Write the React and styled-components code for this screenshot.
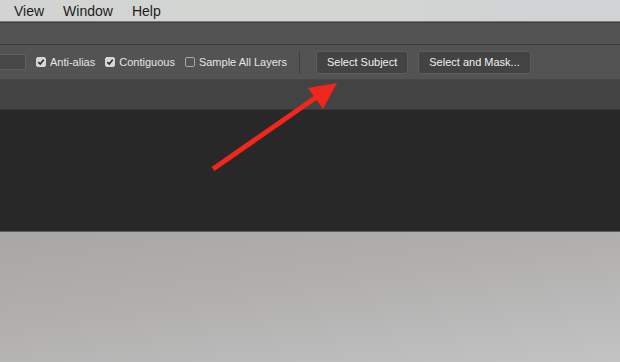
import React from "react";
import styled, { createGlobalStyle } from "styled-components";

const GlobalStyle = createGlobalStyle`
  html, body {
    margin: 0;
    padding: 0;
    width: 620px;
    height: 362px;
    overflow: hidden;
  }
  body {
    font-family: "Liberation Sans", Arial, sans-serif;
  }
`;

const Screen = styled.div`
  position: relative;
  width: 620px;
  height: 362px;
  display: flex;
  flex-direction: column;
  overflow: hidden;
`;

const MenuBar = styled.div`
  height: 22px;
  background: linear-gradient(90deg, #d2d4d3, #d3d5d1 50%, #d0d3d6);
  border-bottom: 1px solid #7d7d7d;
  display: flex;
  align-items: center;
  gap: 19px;
  padding-left: 14px;
  box-sizing: border-box;
  flex-shrink: 0;
`;

const MenuItem = styled.span`
  font-size: 14px;
  color: #1d1d1d;
  line-height: 22px;
`;

const TitleStrip = styled.div`
  height: 23px;
  background: #535353;
  border-top: 1px solid #3e3e3e;
  border-bottom: 1px solid #3c3c3c;
  box-sizing: border-box;
  flex-shrink: 0;
`;

const OptionsBar = styled.div`
  height: 35px;
  background: #535353;
  border-bottom: 1px solid #474747;
  box-sizing: border-box;
  display: flex;
  align-items: center;
  flex-shrink: 0;
`;

const Field = styled.div`
  width: 26px;
  height: 16px;
  background: #474747;
  border: 1px solid #5f5f5f;
  border-left: none;
  box-sizing: border-box;
  margin-right: 10px;
`;

const Check = styled.label`
  display: flex;
  align-items: center;
  gap: 4px;
  margin-right: 10px;
  font-size: 11px;
  color: #e6e6e6;
  white-space: nowrap;
`;

const Box = styled.span`
  width: 10px;
  height: 10px;
  border-radius: 2px;
  box-sizing: border-box;
  display: flex;
  align-items: center;
  justify-content: center;
  background: ${(p) => (p.$checked ? "#d6d6d6" : "transparent")};
  border: 1px solid ${(p) => (p.$checked ? "#d6d6d6" : "#a8a8a8")};
`;

const Divider = styled.div`
  width: 1px;
  height: 23px;
  background: #3f3f3f;
  margin: 0 16px 0 2px;
`;

const Button = styled.div`
  height: 23px;
  padding: 0 10px;
  box-sizing: border-box;
  display: flex;
  align-items: center;
  background: #434343;
  border: 1px solid #5c5c5c;
  border-radius: 3px;
  font-size: 11px;
  color: #f0f0f0;
  margin-right: 10px;
  white-space: nowrap;
`;

const TabStrip = styled.div`
  height: 30px;
  background: #434343;
  border-bottom: 1px solid #363636;
  box-sizing: border-box;
  flex-shrink: 0;
`;

const Canvas = styled.div`
  height: 122px;
  background: #282828;
  border-bottom: 1px solid #5a5a5a;
  box-sizing: border-box;
  flex-shrink: 0;
`;

const Desktop = styled.div`
  flex: 1;
  background: linear-gradient(172deg, #a9a7a6 0%, #b1b0af 45%, #c3c3c3 100%);
`;

const Arrow = styled.svg`
  position: absolute;
  left: 0;
  top: 0;
  pointer-events: none;
`;

function Tick() {
  return (
    <svg width="8" height="8" viewBox="0 0 8 8">
      <path d="M1.3 4.2 L3.2 6 L6.7 1.8" fill="none" stroke="#2a2a2a" strokeWidth="1.6" />
    </svg>
  );
}

function Option({ checked, children }) {
  return (
    <Check>
      <Box $checked={checked}>{checked && <Tick />}</Box>
      {children}
    </Check>
  );
}

export default function App() {
  return (
    <>
      <GlobalStyle />
      <Screen>
        <MenuBar>
          <MenuItem>View</MenuItem>
          <MenuItem>Window</MenuItem>
          <MenuItem>Help</MenuItem>
        </MenuBar>
        <TitleStrip />
        <OptionsBar>
          <Field />
          <Option checked>Anti-alias</Option>
          <Option checked>Contiguous</Option>
          <Option>Sample All Layers</Option>
          <Divider />
          <Button>Select Subject</Button>
          <Button>Select and Mask...</Button>
        </OptionsBar>
        <TabStrip />
        <Canvas />
        <Desktop />
        <Arrow width="620" height="362" viewBox="0 0 620 362">
          <line x1="213" y1="169" x2="318" y2="96" stroke="#f2261d" strokeWidth="5" strokeLinecap="butt" />
          <polygon points="337,83 308,88 323,109" fill="#f2261d" />
        </Arrow>
      </Screen>
    </>
  );
}
